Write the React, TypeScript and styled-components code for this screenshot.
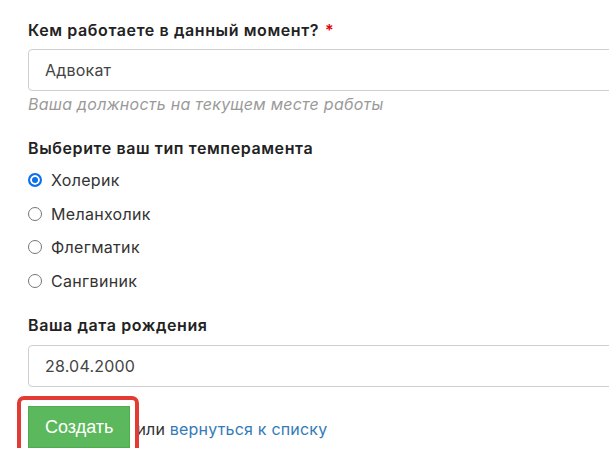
import React from "react";
import styled, { createGlobalStyle } from "styled-components";

const Global = createGlobalStyle`
  html, body { margin: 0; padding: 0; background: #fff; overflow: hidden; }
  body { font-family: Inter, "Noto Sans", sans-serif; color: #212529; }
`;

const Form = styled.form`
  width: 660px;
  padding: 18px 0 0 28px;
  display: flex;
  flex-direction: column;
`;

const Group = styled.div<{ $mb: number }>`
  display: flex;
  flex-direction: column;
  margin-bottom: ${(p) => p.$mb}px;
`;

const Label = styled.label<{ $mb: number }>`
  font-size: 16px;
  line-height: 24px;
  font-weight: 600;
  letter-spacing: 0.6px;
  color: #222;
  margin-bottom: ${(p) => p.$mb}px;
`;

const Required = styled.span`
  color: #e8000b;
  margin-left: 6px;
`;

const Input = styled.input`
  box-sizing: border-box;
  width: 100%;
  height: 42px;
  padding: 0 16px;
  border: 1px solid #cfcfcf;
  border-radius: 4px;
  font-family: Inter, "Noto Sans", sans-serif;
  font-size: 16px;
  letter-spacing: 0.2px;
  color: #444;
  background: #fff;
  outline: none;
`;

const Help = styled.div`
  font-size: 16px;
  line-height: 24px;
  font-style: italic;
  letter-spacing: 0.25px;
  color: #9a9a9a;
  margin-top: 1px;
`;

const RadioList = styled.div`
  display: flex;
  flex-direction: column;
  gap: 9.6px;
`;

const RadioRow = styled.label`
  display: flex;
  align-items: center;
  height: 24px;
  font-size: 16px;
  letter-spacing: 0.3px;
  color: #333;
  gap: 9px;
`;

const Radio = styled.input.attrs({ type: "radio" })`
  appearance: none;
  box-sizing: border-box;
  margin: 0;
  width: 14px;
  height: 14px;
  border-radius: 50%;
  border: 1px solid #767676;
  background: #fff;
  &:checked {
    border: 2px solid #0b6ff0;
    background: #0b6ff0;
    box-shadow: inset 0 0 0 2px #fff;
  }
`;

const Actions = styled.div`
  display: flex;
  align-items: center;
  font-size: 16px;
  color: #333;
`;

const ButtonWrap = styled.span`
  position: relative;
  display: inline-flex;
`;

const Highlight = styled.span`
  position: absolute;
  top: -10px;
  left: -11px;
  right: -9px;
  bottom: -9px;
  border: 4px solid #e23b33;
  border-radius: 7px;
  pointer-events: none;
`;

const SubmitButton = styled.button`
  box-sizing: border-box;
  height: 42px;
  padding: 0 16px;
  border: 1px solid #4cae4c;
  border-radius: 0;
  background: #5cb85c;
  color: #fff;
  font-family: "Liberation Sans", Arial, sans-serif;
  font-size: 18px;
  line-height: 24px;
`;

const Or = styled.span`
  margin-left: 6px;
  line-height: 24px;
  margin-top: 4px;
  letter-spacing: 0.2px;
`;

const Link = styled.a`
  color: #337ab7;
  text-decoration: none;
`;

export default function App() {
  const options = ["Холерик", "Меланхолик", "Флегматик", "Сангвиник"];
  return (
    <>
      <Global />
      <Form onSubmit={(e) => e.preventDefault()}>
        <Group $mb={20}>
          <Label $mb={7}>
            Кем работаете в данный момент?<Required>*</Required>
          </Label>
          <Input defaultValue="Адвокат" />
          <Help>Ваша должность на текущем месте работы</Help>
        </Group>
        <Group $mb={20}>
          <Label $mb={8}>Выберите ваш тип темперамента</Label>
          <RadioList>
            {options.map((o, i) => (
              <RadioRow key={o}>
                <Radio name="temp" defaultChecked={i === 0} />
                {o}
              </RadioRow>
            ))}
          </RadioList>
        </Group>
        <Group $mb={19}>
          <Label $mb={8}>Ваша дата рождения</Label>
          <Input defaultValue="28.04.2000" />
        </Group>
        <Actions>
          <ButtonWrap>
            <SubmitButton type="submit">Создать</SubmitButton>
            <Highlight />
          </ButtonWrap>
          <Or>
            или <Link href="#">вернуться к списку</Link>
          </Or>
        </Actions>
      </Form>
    </>
  );
}
